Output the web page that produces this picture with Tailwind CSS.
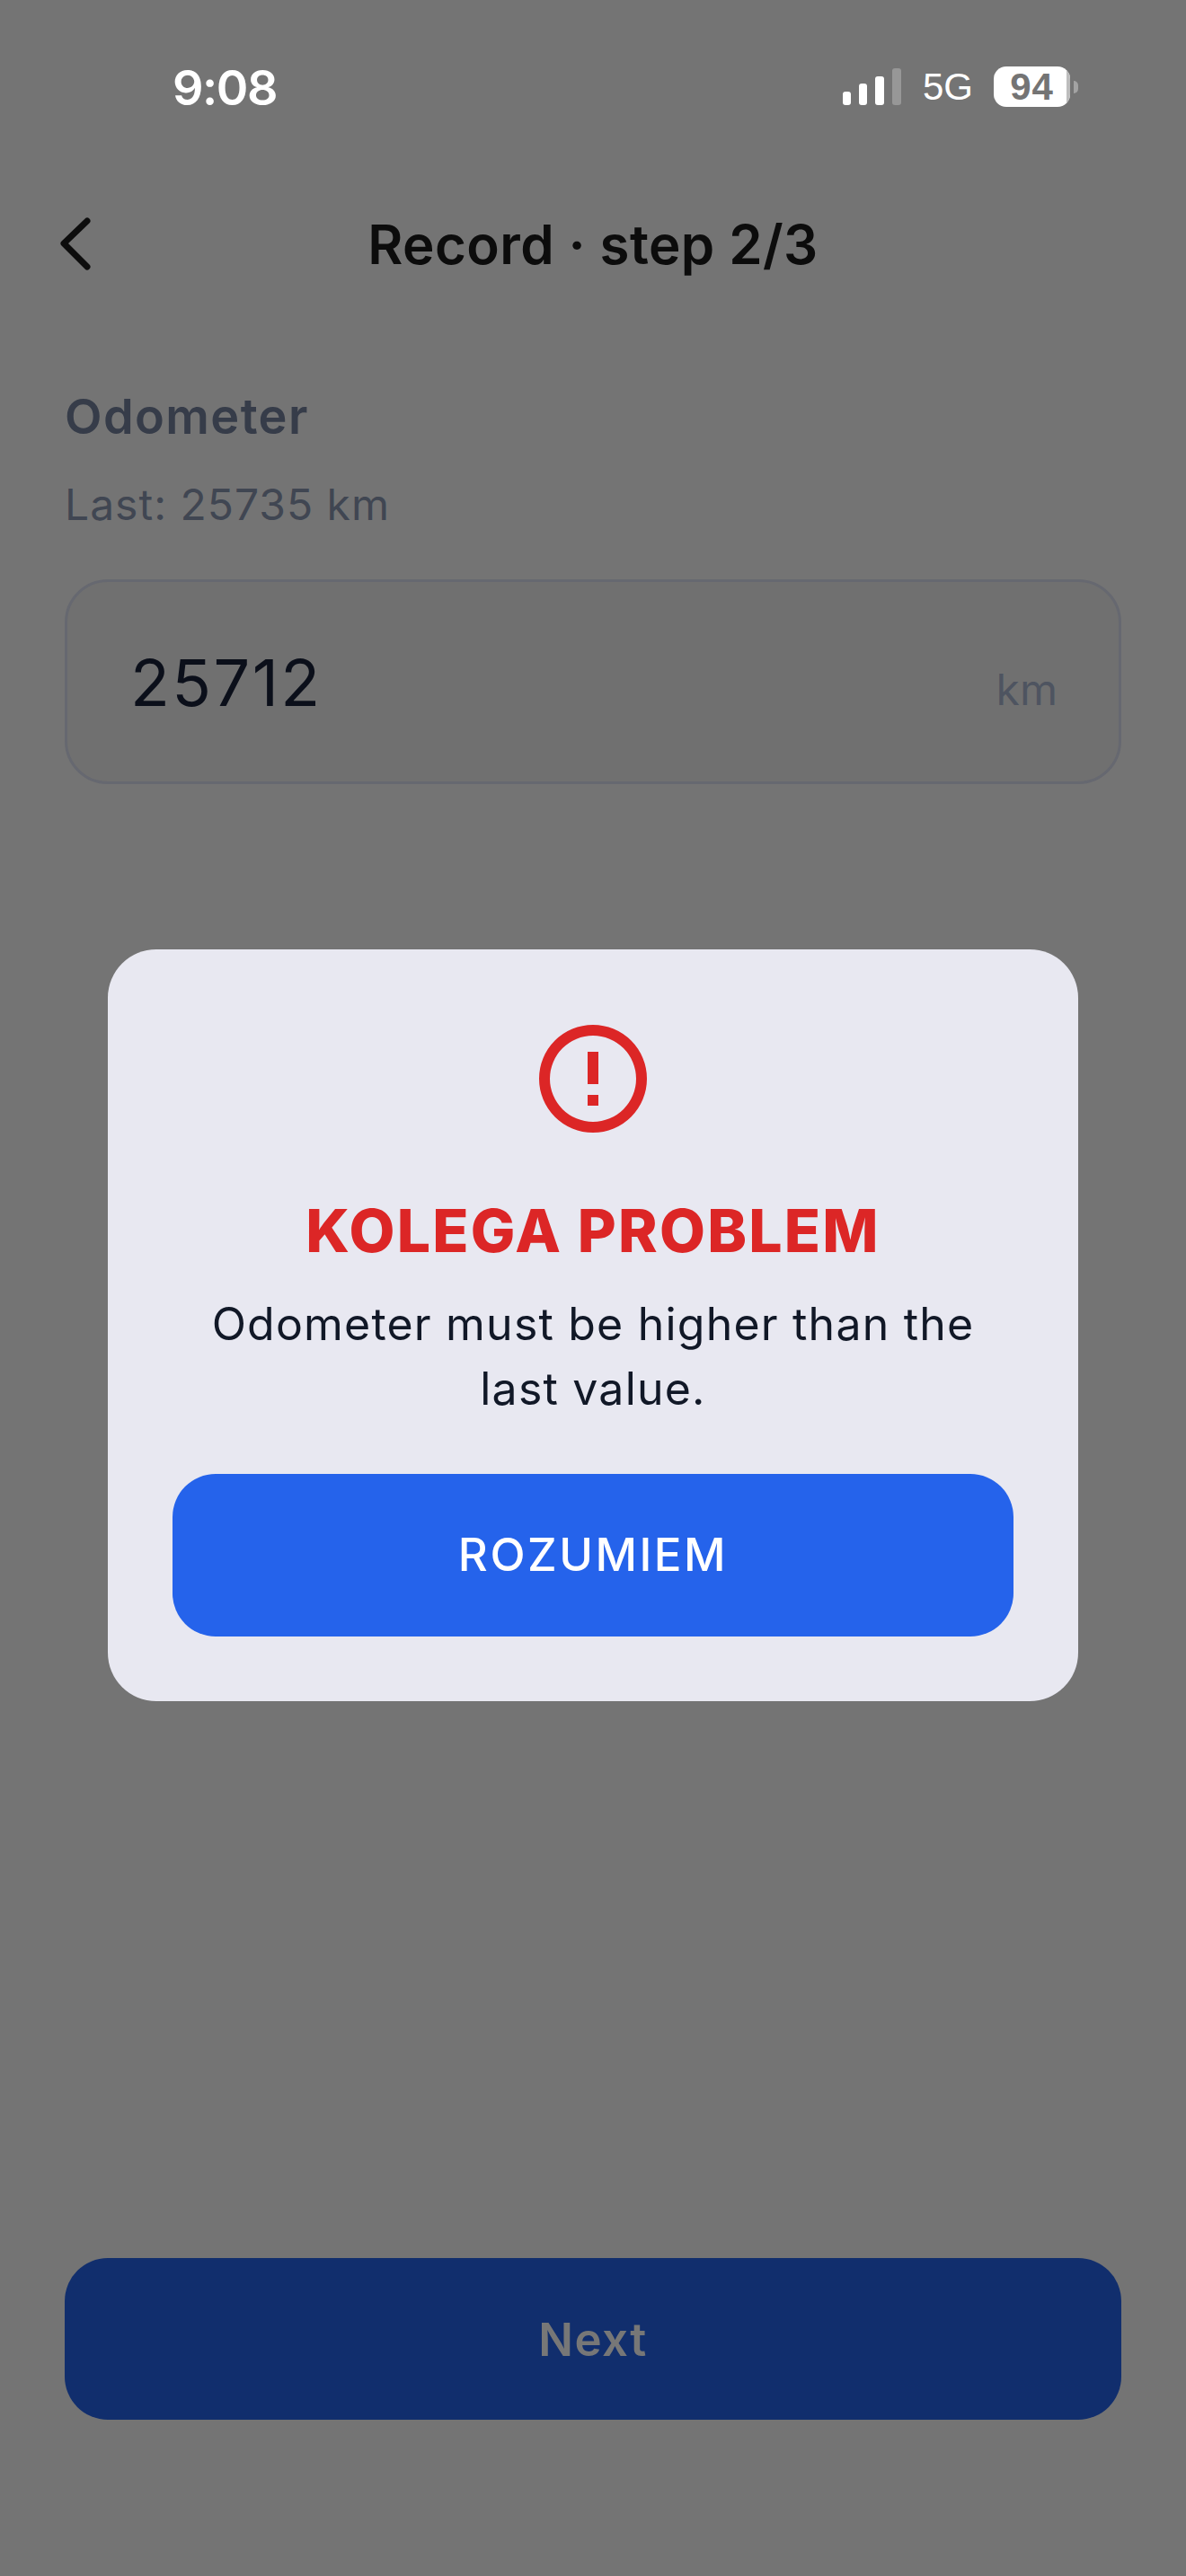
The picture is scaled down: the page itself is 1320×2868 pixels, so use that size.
<!DOCTYPE html>
<html lang="en">
<head>
<meta charset="utf-8"/>
<title>Record - step 2/3</title>
<script src="https://cdn.jsdelivr.net/npm/@tailwindcss/browser@4"></script>
</head>
<body class="m-0 font-['Inter',sans-serif]">
<div class="relative flex h-[2868px] w-[1320px] flex-col overflow-hidden bg-[#747474]">
  <!-- status bar -->
  <div class="flex h-[206px] items-start justify-between pt-[66px] pl-[192px] pr-[120px]">
    <span class="text-[54px] leading-[64px] font-semibold tracking-[-1.5px] text-white">9:08</span>
    <div class="mt-[4px] flex h-[45px] items-center pt-[8px]">
      <div class="flex h-[41px] items-end gap-[9px]">
        <div class="h-[15px] w-[9px] rounded-[3px] bg-white"></div>
        <div class="h-[24px] w-[9px] rounded-[3px] bg-white"></div>
        <div class="h-[32px] w-[10px] rounded-[3px] bg-white"></div>
        <div class="h-[41px] w-[10px] rounded-[3px] bg-[#979797]"></div>
      </div>
      <span class="ml-[24px] font-['Liberation_Sans',sans-serif] text-[42px] leading-[45px] text-white">5G</span>
      <div class="relative ml-[23px] flex h-[45px] w-[85px] items-center justify-center overflow-hidden rounded-[14px] bg-white">
        <span class="font-['Liberation_Sans',sans-serif] text-[42px] leading-[45px] font-bold tracking-[1px] text-[#747474]">94</span>
        <div class="absolute top-0 right-0 h-full w-[4px] bg-[#bdbdbd]"></div>
      </div>
      <div class="ml-[4px] h-[14px] w-[5px] rounded-r-[5px] bg-[#a3a3a3]"></div>
    </div>
  </div>

  <!-- nav -->
  <div class="relative flex h-[132px] items-center justify-center">
    <svg class="absolute left-[60px] top-[29px] h-[72px] w-[48px]" viewBox="0 0 48 72" fill="none" stroke="#0d0d0d" stroke-width="7" stroke-linecap="round" stroke-linejoin="round"><path d="M37 11 L11 36 L37 62" /></svg>
    <span class="text-[60px] leading-[80px] font-semibold tracking-[0.4px] text-[#0c0c0c]">Record · step 2/3</span>
  </div>

  <!-- form -->
  <div class="flex flex-1 flex-col px-[72px] pb-[174px]">
    <div class="mt-[85px] text-[54px] leading-[81px] font-semibold tracking-[1.4px] text-[#363c49]">Odometer</div>
    <div class="mt-[22px] text-[48px] leading-[72px] tracking-[1px] text-[#404652]">Last: 25735 km</div>
    <div class="mt-[47px] flex h-[228px] items-center justify-between rounded-[48px] border-[3px] border-[#666870] bg-[#707070] pl-[70px] pr-[68px]">
      <span class="mt-[2px] text-[72px] leading-[90px] tracking-[2.4px] text-[#0b0f1a]">25712</span>
      <span class="mt-[18px] text-[48px] leading-[60px] text-[#4e5460]">km</span>
    </div>
    <button class="mt-auto h-[180px] w-full rounded-[48px] bg-[#112e6d] pt-[2px]">
      <span class="text-[51px] font-semibold tracking-[1.5px] text-[#777777]">Next</span>
    </button>
  </div>

  <!-- dialog -->
  <div class="absolute inset-0 flex items-center justify-center pt-[82px]">
    <div class="flex w-[1080px] flex-col items-center rounded-[54px] bg-[#e8e8f1] px-[72px] py-[72px]">
      <svg class="h-[144px] w-[144px]" viewBox="0 0 24 24" fill="#dc2626"><path d="M11 7h2v6h-2zm0 8h2v2h-2z"/><path d="M12 2a10 10 0 1 0 0 20 10 10 0 0 0 0-20zm0 18a8 8 0 1 1 0-16 8 8 0 0 1 0 16z"/></svg>
      <div class="mt-[52px] text-[66px] leading-[90px] font-extrabold tracking-[2.2px] text-[#dc2626]">KOLEGA PROBLEM</div>
      <p class="mt-[23px] text-center text-[50px] leading-[72px] tracking-[1.2px] text-[#111827]">Odometer must be higher than the last value.</p>
      <button class="mt-[59px] h-[181px] w-full rounded-[48px] bg-[#2563eb] text-white">
        <span class="text-[51px] font-medium tracking-[2.5px]">ROZUMIEM</span>
      </button>
    </div>
  </div>
</div>
</body>
</html>
